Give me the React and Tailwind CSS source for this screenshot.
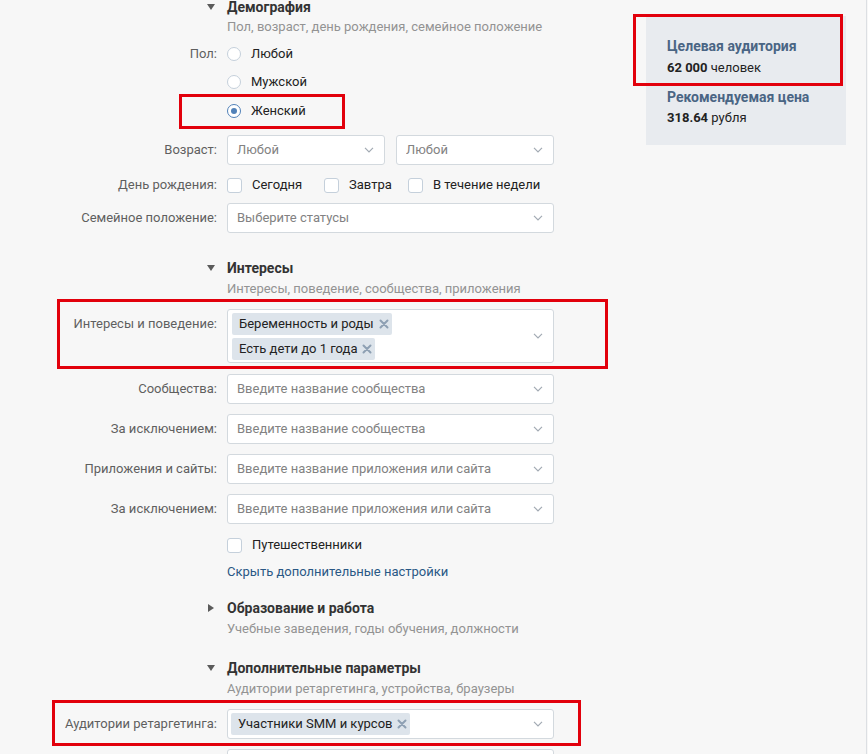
import React from "react";

const Chevron = () => (
  <svg width="10" height="6" viewBox="0 0 10 6" className="shrink-0">
    <path d="M1 0.8l4 4 4-4" fill="none" stroke="#a2aab3" strokeWidth="1.2" />
  </svg>
);

const Cross = () => (
  <svg width="10" height="10" viewBox="0 0 10 10" className="shrink-0">
    <path d="M1.5 1.5l7 7M8.5 1.5l-7 7" stroke="#8ea0b3" strokeWidth="2" strokeLinecap="round" />
  </svg>
);

const TriangleDown = () => (
  <svg width="8" height="6" viewBox="0 0 8 6">
    <polygon points="0,0 8,0 4,6" fill="#5b5b5b" />
  </svg>
);

const TriangleRight = () => (
  <svg width="6" height="8" viewBox="0 0 6 8">
    <polygon points="0,0 6,4 0,8" fill="#5b5b5b" />
  </svg>
);

// red annotation frame drawn over the form
const RedFrame = ({ className }) => (
  <div className={`absolute border-[3px] border-[#e2000c] pointer-events-none ${className}`} />
);

const Row = ({ label, className = "", labelClass = "leading-[30px]", children }) => (
  <div className={`relative flex items-start ${className}`}>
    <div className={`w-[217px] shrink-0 text-right text-[#5f5f5f] whitespace-nowrap ${labelClass}`}>
      {label}
    </div>
    <div className="ml-[10px] w-[327px]">{children}</div>
  </div>
);

const Select = ({ text, className = "w-full" }) => (
  <div
    className={`h-[30px] flex items-center justify-between bg-white border border-[#d3d9de] rounded-[3px] pl-[9px] pr-[10px] text-[#828282] ${className}`}
  >
    <span className="truncate">{text}</span>
    <Chevron />
  </div>
);

const Tag = ({ text }) => (
  <span className="inline-flex items-center h-[22px] rounded-[2px] bg-[#dde4eb] pl-[7px] pr-[3px] text-[#222]">
    {text}
    <span className="ml-[5px]">
      <Cross />
    </span>
  </span>
);

const Checkbox = ({ label }) => (
  <div className="flex items-center h-[20px]">
    <span className="w-[15px] h-[15px] rounded-[3px] border border-[#c5d0db] bg-white shrink-0" />
    <span className="ml-[10px] text-[#222] whitespace-nowrap">{label}</span>
  </div>
);

const Radio = ({ label, checked }) => (
  <div className="flex items-center">
    <span
      className={`w-[14px] h-[14px] rounded-full border bg-white flex items-center justify-center shrink-0 ${
        checked ? "border-[#5181b8]" : "border-[#c5d0db]"
      }`}
    >
      {checked && <span className="w-[6px] h-[6px] rounded-full bg-[#5181b8]" />}
    </span>
    <span className="ml-[10px] text-[#222]">{label}</span>
  </div>
);

const SectionHead = ({ title, subtitle, open = true, className = "", subClass = "mt-[5px]" }) => (
  <div className={className}>
    <div className="flex items-center h-[14px]">
      <div className="w-[217px] shrink-0 flex justify-end pr-[2px]">
        {open ? <TriangleDown /> : <span className="mr-[1px]"><TriangleRight /></span>}
      </div>
      <div className="ml-[10px] font-bold text-[14px] leading-[14px] text-[#333] whitespace-nowrap">{title}</div>
    </div>
    <div className={`ml-[227px] leading-[18px] text-[#939393] ${subClass}`}>{subtitle}</div>
  </div>
);

export default function App() {
  return (
    <div className="w-[868px] h-[754px] overflow-hidden bg-[#f7f7f7] font-[Roboto,Arial,sans-serif] text-[13px]">
      <div className="flex w-[867px] h-full border-r border-[#dcdfe3]">
        {/* Form column */}
        <main className="relative w-[620px] shrink-0">
          <SectionHead
            subClass="mt-[4px]"
            title="Демография"
            subtitle="Пол, возраст, день рождения, семейное положение"
          />

          <Row label="Пол:" labelClass="leading-[28px]" className="mt-[4px]">
            <div className="h-[28px] flex items-center">
              <Radio label="Любой" />
            </div>
            <div className="h-[28px] flex items-center">
              <Radio label="Мужской" />
            </div>
            <div className="relative h-[29px] flex items-center">
              <Radio label="Женский" checked />
            </div>
          </Row>
          <RedFrame className="top-[94px] left-[179px] w-[166px] h-[35px]" />

          <Row label="Возраст:" className="mt-[10px]">
            <div className="flex gap-[11px]">
              <Select text="Любой" className="w-[158px]" />
              <Select text="Любой" className="w-[158px]" />
            </div>
          </Row>

          <Row label="День рождения:" labelClass="leading-[20px]" className="mt-[10px]">
            <div className="flex">
              <div className="w-[97px]">
                <Checkbox label="Сегодня" />
              </div>
              <div className="w-[84px]">
                <Checkbox label="Завтра" />
              </div>
              <Checkbox label="В течение недели" />
            </div>
          </Row>

          <Row label="Семейное положение:" className="mt-[8px]">
            <Select text="Выберите статусы" />
          </Row>

          <SectionHead
            className="mt-[28px]"
            title="Интересы"
            subtitle="Интересы, поведение, сообщества, приложения"
          />

          <Row label="Интересы и поведение:" className="mt-[11px]">
            <div className="h-[54px] flex items-center justify-between bg-white border border-[#d3d9de] rounded-[3px] pl-[4px] pr-[10px]">
              <div className="flex flex-col items-start gap-[3px]">
                <Tag text="Беременность и роды" />
                <Tag text="Есть дети до 1 года" />
              </div>
              <Chevron />
            </div>
          </Row>
          <RedFrame className="top-[299px] left-[57px] w-[551px] h-[70px]" />

          <Row label="Сообщества:" className="mt-[11px]">
            <Select text="Введите название сообщества" />
          </Row>
          <Row label="За исключением:" className="mt-[10px]">
            <Select text="Введите название сообщества" />
          </Row>
          <Row label="Приложения и сайты:" className="mt-[10px]">
            <Select text="Введите название приложения или сайта" />
          </Row>
          <Row label="За исключением:" className="mt-[10px]">
            <Select text="Введите название приложения или сайта" />
          </Row>

          <Row label="" labelClass="leading-[20px]" className="mt-[11px]">
            <Checkbox label="Путешественники" />
          </Row>

          <div className="mt-[8px] ml-[227px] leading-[18px] text-[#2a5885]">
            Скрыть дополнительные настройки
          </div>

          <SectionHead
            className="mt-[20px]"
            open={false}
            title="Образование и работа"
            subtitle="Учебные заведения, годы обучения, должности"
          />

          <SectionHead
            className="mt-[23px]"
            title="Дополнительные параметры"
            subtitle="Аудитории ретаргетинга, устройства, браузеры"
          />

          <Row label="Аудитории ретаргетинга:" className="mt-[11px]">
            <div className="h-[30px] flex items-center justify-between bg-white border border-[#d3d9de] rounded-[3px] pl-[3px] pr-[10px]">
              <Tag text="Участники SMM и курсов" />
              <Chevron />
            </div>
          </Row>
          <RedFrame className="top-[700px] left-[52px] w-[529px] h-[46px]" />

          <Row label="" className="mt-[10px]">
            <Select text="" />
          </Row>
        </main>

        {/* Audience summary */}
        <aside className="relative ml-[26px] mt-[16px] w-[200px] h-[129px] bg-[#e8ebef] pl-[21px] pt-[21px] leading-[18px]">
          <div className="font-bold text-[14px] text-[#4a6584]">Целевая аудитория</div>
          <div className="mt-[4px] text-[#222]">
            <span className="font-bold">62 000</span> человек
          </div>
          <div className="mt-[11px] font-bold text-[14px] text-[#4a6584]">Рекомендуемая цена</div>
          <div className="mt-[3px] text-[#222]">
            <span className="font-bold">318.64</span> рубля
          </div>
          <RedFrame className="top-[-2px] left-[-13px] w-[210px] h-[72px]" />
        </aside>
      </div>
    </div>
  );
}
